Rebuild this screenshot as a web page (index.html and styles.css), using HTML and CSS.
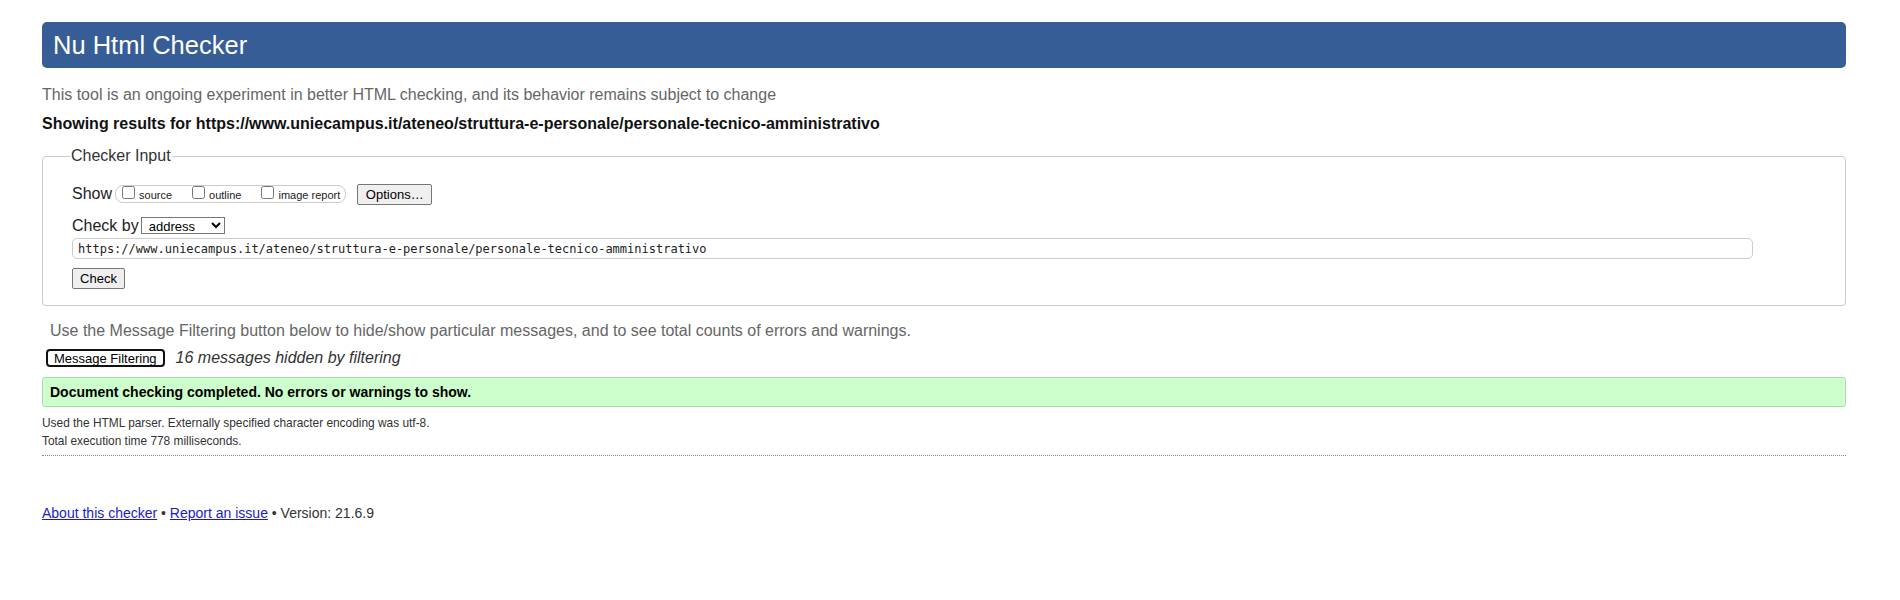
FILE: index.html
```html
<!DOCTYPE html>
<html lang="en">
<head>
    <meta charset="UTF-8">
    <meta name="viewport" content="width=device-width, initial-scale=1.0">
    <title>Showing results for https://www.uniecampus.it/ateneo/struttura-e-personale/personale-tecnico-amministrativo - Nu Html Checker</title>
    <link rel="stylesheet" href="styles.css">
</head>
<body>
    <h1 class="titolo">Nu Html Checker</h1>
    <p class="intro">This tool is an ongoing experiment in better HTML checking, and its behavior remains subject to change</p>
    <p class="results">Showing results for https://www.uniecampus.it/ateneo/struttura-e-personale/personale-tecnico-amministrativo</p>

    <form class="checker-form">
        <fieldset>
            <legend>Checker Input</legend>
            <div class="row row-show">
                <span class="label">Show</span>
                <span class="show-box">
                    <label><input type="checkbox" name="showsource">source</label>
                    <label><input type="checkbox" name="showoutline">outline</label>
                    <label><input type="checkbox" name="showimagereport">image report</label>
                </span>
                <button type="button" class="btn btn-options">Options…</button>
            </div>
            <div class="row row-checkby">
                <span class="label">Check by</span>
                <select name="checkby">
                    <option value="address">address</option>
                    <option value="file">file upload</option>
                    <option value="text">text input</option>
                </select>
            </div>
            <input type="url" class="doc-url" name="doc" value="https://www.uniecampus.it/ateneo/struttura-e-personale/personale-tecnico-amministrativo">
            <div class="row-submit">
                <button type="submit" class="btn btn-check">Check</button>
            </div>
        </fieldset>
    </form>

    <p class="filter-note">Use the Message Filtering button below to hide/show particular messages, and to see total counts of errors and warnings.</p>
    <div class="row row-filter">
        <button type="button" class="btn-filter">Message Filtering</button>
        <em class="hidden-count">16 messages hidden by filtering</em>
    </div>

    <div class="success">Document checking completed. No errors or warnings to show.</div>

    <div class="details">
        <p>Used the HTML parser. Externally specified character encoding was utf-8.</p>
        <p>Total execution time 778 milliseconds.</p>
    </div>

    <p class="footer">
        <a href="#">About this checker</a> • <a href="#">Report an issue</a> • Version: 21.6.9
    </p>
</body>
</html>
```

FILE: styles.css
```css
body {
    font-family: "Liberation Sans", Arial, sans-serif;
    color: #222;
    background-color: #fff;
    margin: 0;
    padding: 22px 54px 0 42px;
}
.titolo {
    margin: 0;
    height: 46px;
    padding-left: 11px;
    background-color: #365d95;
    color: white;
    font-size: 25.5px;
    font-weight: normal;
    line-height: 46px;
    border-radius: 5px;
}
.intro {
    margin: 17px 0 0;
    font-size: 16px;
    line-height: 20px;
    color: #666;
}
.results {
    margin: 9px 0 0;
    font-size: 16px;
    font-weight: bold;
    line-height: 20px;
    color: #111;
}

/* riquadro del form */
fieldset {
    margin: 13px 0 0;
    padding: 0 28px 16px 29px;
    border: 1px solid #ccc;
    border-radius: 4px;
    min-width: 0;
}
legend {
    margin-left: -2px;
    padding: 0 1px;
    font-size: 16px;
    line-height: 18px;
    color: #333;
}
.row {
    display: flex;
    align-items: baseline;
}
.label {
    font-size: 16px;
    line-height: 18px;
    color: #222;
}
.row-show {
    margin-top: 19px;
}
.show-box {
    display: inline-flex;
    align-items: baseline;
    margin-left: 3px;
    padding: 0 5px 0 6px;
    border: 1px solid #ccc;
    border-radius: 8px;
    font-size: 11px;
    line-height: 13px;
}
.show-box label {
    display: flex;
    align-items: baseline;
    gap: 4px;
    margin-right: 20px;
}
.show-box label:last-child {
    margin-right: 0;
}
.show-box input {
    width: 13px;
    height: 13px;
    margin: 0;
}
.btn {
    height: 21px;
    padding: 0;
    font-family: "Liberation Sans", Arial, sans-serif;
    font-size: 13px;
    color: #000;
    background-color: #efefef;
    border: 1px solid #767676;
    border-radius: 2px;
}
.btn-options {
    width: 75px;
    margin-left: 11px;
}
.row-checkby {
    margin-top: 12px;
}
.row-checkby select {
    width: 84px;
    height: 17px;
    margin-left: 2px;
    padding: 0 0 0 3px;
    font-family: "Liberation Sans", Arial, sans-serif;
    font-size: 13px;
    color: #000;
    background-color: #fff;
    border: 1px solid #767676;
    border-radius: 0;
}
.doc-url {
    display: block;
    box-sizing: border-box;
    width: 1681px;
    height: 21px;
    margin: 3px 0 0;
    padding: 0 5px;
    font-family: "DejaVu Sans Mono", "Liberation Mono", monospace;
    font-size: 12px;
    color: #222;
    border: 1px solid #ccc;
    border-radius: 5px;
}
.row-submit {
    margin-top: 9px;
}
.btn-check {
    width: 53px;
}

.filter-note {
    margin: 15px 0 0 8px;
    font-size: 16px;
    line-height: 20px;
    color: #666;
}
.row-filter {
    margin: 8px 0 0 4px;
}
.btn-filter {
    height: 18px;
    padding: 0 6px;
    font-family: "Liberation Sans", Arial, sans-serif;
    font-size: 13px;
    color: #000;
    background-color: #fff;
    border: 2px solid #111;
    border-radius: 4px;
}
.hidden-count {
    margin-left: 11px;
    font-size: 16px;
    line-height: 18px;
    color: #333;
}

/* messaggio di esito */
.success {
    margin-top: 10px;
    padding-left: 7px;
    font-size: 14px;
    font-weight: bold;
    line-height: 28px;
    color: #000;
    background-color: #ccffcc;
    border: 1px solid #a8dca8;
    border-radius: 3px;
}
.details {
    padding: 9px 0 3px;
    border-bottom: 1px dotted #888;
}
.details p {
    margin: 0 0 4px;
    font-size: 11.9px;
    line-height: 14px;
    color: #333;
}
.footer {
    margin: 49px 0 0;
    font-size: 14px;
    line-height: 16px;
    color: #333;
}
.footer a {
    color: #1a1acc;
}
```
